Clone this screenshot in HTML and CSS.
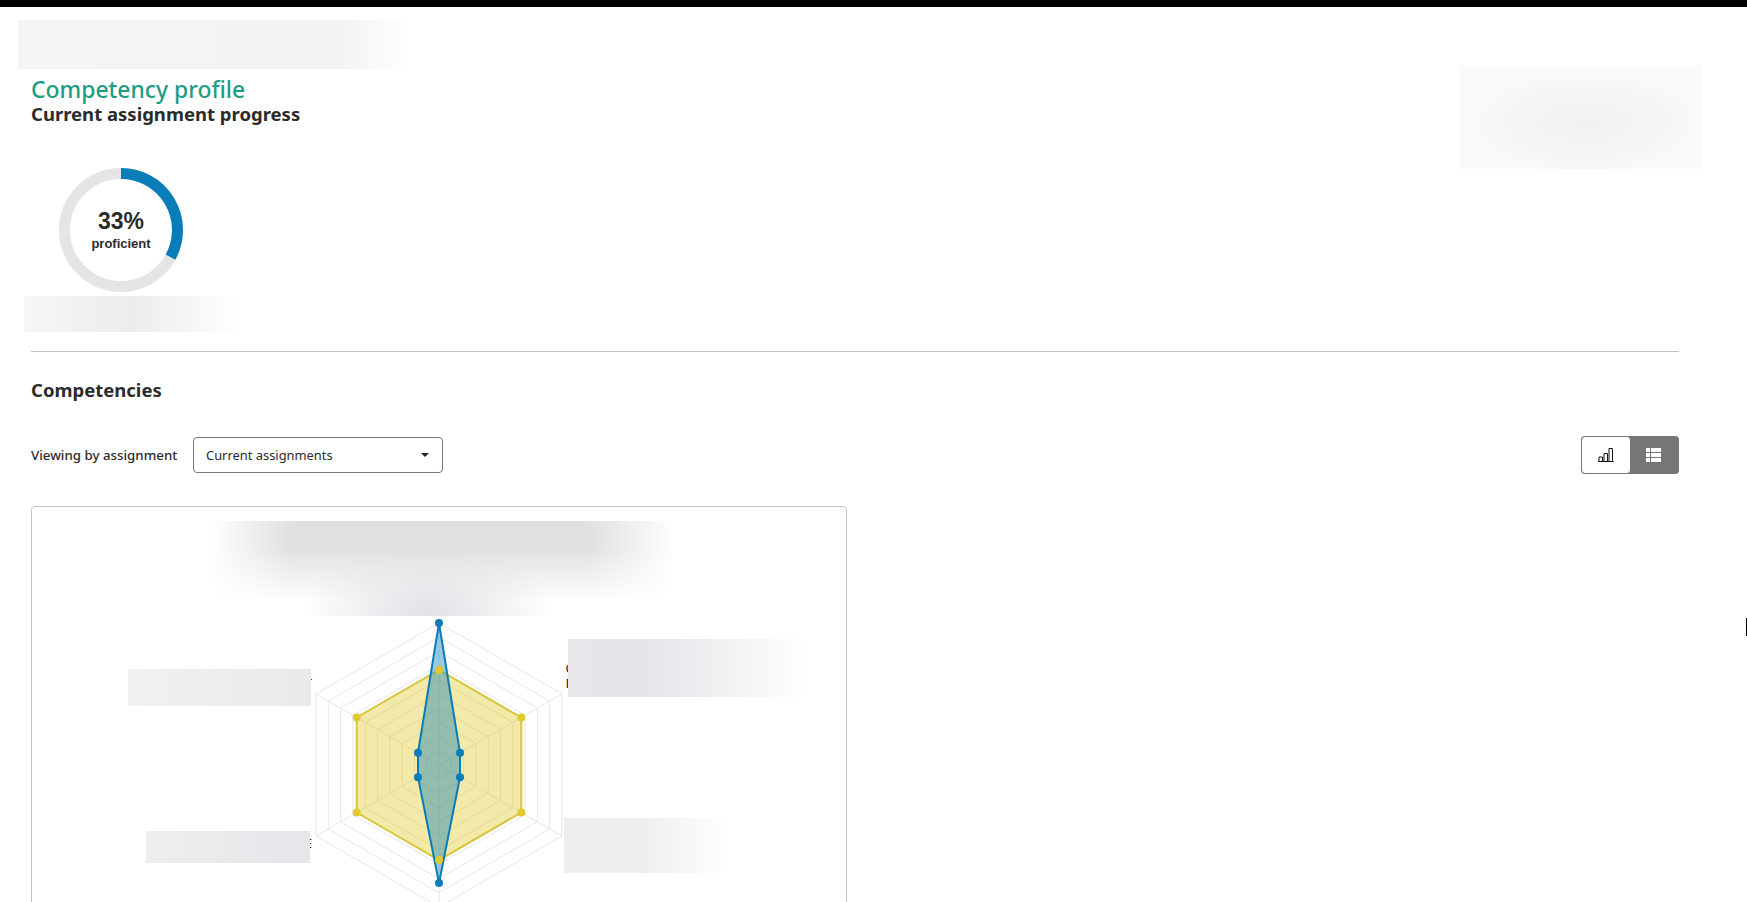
FILE: index.html
```html
<!DOCTYPE html>
<html lang="en">
<head>
<meta charset="utf-8">
<title>Competency profile</title>
<link rel="stylesheet" href="styles.css">
</head>
<body>
<div class="topbar"></div>
<main class="page">
  <section class="summary">
    <h1 class="title">Competency profile</h1>
    <h2 class="subtitle">Current assignment progress</h2>
    <div class="donut">
      <svg class="donut-ring" width="124" height="124" viewBox="-62 -62 124 124" aria-hidden="true">
        <circle class="donut-track" r="56.5"/>
        <path class="donut-value" d="M0 -56.5A56.5 56.5 0 0 1 49.5 27.2"/>
      </svg>
      <div class="donut-label">
        <span class="donut-num">33%</span>
        <span class="donut-text">proficient</span>
      </div>
    </div>
  </section>
  <hr class="rule">
  <h2 class="section-title">Competencies</h2>
  <div class="toolbar">
    <label class="field-label">Viewing by assignment</label>
    <div class="select">
      <span>Current assignments</span>
      <span class="caret"></span>
    </div>
    <div class="toggle">
      <button class="toggle-btn">
        <svg width="16" height="14" viewBox="0 0 16 14" aria-hidden="true"><path d="M.2 13.500h15.600M1 13V9h3.500v4M6 13V5.500h3.500V13M11 13V.5h3.500V13" fill="none" stroke="#111" stroke-width="1"/></svg>
      </button>
      <button class="toggle-btn is-active">
        <svg width="15" height="14" viewBox="0 0 15 14" aria-hidden="true"><path d="M0 0h4v4H0zM5 0h10v4H5zM0 5h4v4H0zM5 5h10v4H5zM0 10h4v4H0zM5 10h10v4H5z" fill="#fff"/></svg>
      </button>
    </div>
  </div>
  <div class="card">
    <svg class="radar" width="814" height="420" viewBox="-407 -258 814 420" aria-hidden="true">
      <defs>
        <polygon id="hex" points="0,-1 .866,-.5 .866,.5 0,1 -.866,.5 -.866,-.5" vector-effect="non-scaling-stroke"/>
      </defs>
      <g class="grid">
        <path d="M0 0V-142M0 0L123 -71M0 0L123 71M0 0V142M0 0L-123 71M0 0L-123 -71"/>
        <use href="#hex" transform="scale(14.2)"/>
        <use href="#hex" transform="scale(28.4)"/>
        <use href="#hex" transform="scale(42.6)"/>
        <use href="#hex" transform="scale(56.8)"/>
        <use href="#hex" transform="scale(71)"/>
        <use href="#hex" transform="scale(85.2)"/>
        <use href="#hex" transform="scale(99.4)"/>
        <use href="#hex" transform="scale(113.6)"/>
        <use href="#hex" transform="scale(127.8)"/>
        <use href="#hex" transform="scale(142)"/>
      </g>
      <polygon class="area-yellow" points="0,-95 82.3,-47.5 82.3,47.5 0,95 -82.3,47.5 -82.3,-47.5"/>
      <polygon class="area-blue" points="0,-142 21,-12.2 21,12.2 0,118 -21,12.2 -21,-12.2"/>
      <g class="dots-yellow">
        <circle cx="0" cy="-95" r="4"/><circle cx="82.3" cy="-47.5" r="4"/><circle cx="82.3" cy="47.500" r="4"/>
        <circle cx="0" cy="95" r="4"/><circle cx="-82.3" cy="47.5" r="4"/><circle cx="-82.3" cy="-47.5" r="4"/>
      </g>
      <g class="dots-blue">
        <circle cx="0" cy="-142" r="4"/><circle cx="21" cy="-12.2" r="4"/><circle cx="21" cy="12.2" r="4"/>
        <circle cx="0" cy="118" r="4"/><circle cx="-21" cy="12.2" r="4"/><circle cx="-21" cy="-12.2" r="4"/>
      </g>
      <text class="axis-label" x="-127" y="-77" text-anchor="end">T</text>
      <text class="axis-label" x="-127" y="83" text-anchor="end">E</text>
      <text class="axis-label" x="126.500" y="-92">C</text>
      <text class="axis-label" x="126.500" y="-77">P</text>
    </svg>
  </div>
</main>
<div class="redact r-top"></div>
<div class="redact r-side"></div>
<div class="redact r-under"></div>
<div class="redact r-chart"></div>
<div class="redact r-lt"></div>
<div class="redact r-rt"></div>
<div class="redact r-lb"></div>
<div class="redact r-rb"></div>
<div class="cursor"></div>
</body>
</html>
```
FILE: styles.css
```css
* { box-sizing: border-box; }
html, body { margin: 0; height: 902px; overflow: hidden; background: #fff; }
body { font-family: "Noto Sans", "Open Sans", sans-serif; color: #2b2b2b; position: relative; }
.topbar { height: 7px; background: #000; }
.page { padding: 70px 68px 0 31px; }
.summary { height: 274px; }
.title { margin: 0; font-size: 22.900px; line-height: 25px; font-weight: 500; color: #1f9c84; }
.subtitle { margin: 0; font-size: 18.500px; line-height: 24px; font-weight: 700; }
.donut { position: relative; width: 124px; height: 124px; margin: 42px 0 0 28px; }
.donut-ring { display: block; }
.donut-track { fill: none; stroke: #e5e5e5; stroke-width: 11; }
.donut-value { fill: none; stroke: #0a7cb8; stroke-width: 11; }
.donut-label { position: absolute; inset: 0; display: flex; flex-direction: column; align-items: center; justify-content: center; gap: 2px; font-family: "Liberation Sans", Arial, sans-serif; font-weight: 700; }
.donut-num { font-size: 23px; line-height: 26px; }
.donut-text { font-size: 13px; line-height: 16px; }
.rule { margin: 0; border: 0; border-top: 1px solid #c4c4c4; }
.section-title { margin: 23px 0 0; font-size: 18.500px; line-height: 29px; font-weight: 700; }
.toolbar { display: flex; align-items: center; margin-top: 32px; height: 38px; }
.field-label { font-size: 13.300px; font-weight: 500; width: 162px; }
.select { width: 250px; height: 36px; border: 1px solid #777; border-radius: 4px; display: flex; align-items: center; justify-content: space-between; padding: 0 13px 0 12px; font-size: 12.900px; }
.caret { width: 0; height: 0; border-left: 4px solid transparent; border-right: 4px solid transparent; border-top: 4px solid #222; }
.toggle { margin-left: auto; display: flex; width: 98px; height: 38px; background: #767676; border-radius: 4px; }
.toggle-btn { flex: 0 0 50px; padding: 0; border: 1px solid #777; background: #fff; border-radius: 4px; display: flex; align-items: center; justify-content: center; }
.toggle-btn.is-active { flex: 1; background: #767676; border-color: #767676; padding-right: 3px; }
.card { margin-top: 32px; width: 816px; height: 480px; border: 1px solid #c4c4c4; border-radius: 4px; }
.radar { display: block; }
.grid { fill: none; stroke: #e7e7e7; stroke-width: 1; }
.grid use { vector-effect: non-scaling-stroke; }
.area-yellow { fill: rgba(226, 200, 40, .4); stroke: #d8c63a; stroke-width: 2; }
.dots-yellow { fill: #dfc92f; }
.area-blue { fill: rgba(0, 122, 184, .4); stroke: #0a7cb8; stroke-width: 2; }
.dots-blue { fill: #0a7cb8; }
.axis-label { font-size: 13px; fill: #222; }
.redact { position: absolute; }
.r-top { left: 18px; top: 20px; width: 392px; height: 49px; background: linear-gradient(90deg, #f5f5f5 0, #f2f2f2 80%, #fff 100%); }
.r-side { left: 1460px; top: 65px; width: 242px; height: 104px; background: radial-gradient(ellipse 50% 50% at 52% 55%, #f1f1f1 0, #f4f4f4 55%, #fafafa 100%); }
.r-under { left: 24px; top: 296px; width: 216px; height: 36px; background: linear-gradient(90deg, #f6f6f6 0, #ececec 50%, #fff 100%); }
.r-chart { left: 210px; top: 521px; width: 484px; height: 95px; background:
  radial-gradient(ellipse 26% 80% at 45% 100%, #e1e1e6 0, rgba(225,225,230,.55) 45%, rgba(255,255,255,0) 100%),
  linear-gradient(180deg, rgba(255,255,255,0) 28%, #fff 85%),
  linear-gradient(90deg, #fff 0, #e0e0e0 17%, #e0e0e0 78%, #fff 96%); }
.r-lt { left: 128px; top: 669px; width: 183px; height: 37px; background: linear-gradient(90deg, #f1f1f2 0, #e9e9ec 100%); }
.r-rt { left: 568px; top: 639px; width: 240px; height: 58px; background: linear-gradient(90deg, #e6e6eb 0, #e4e4e9 30%, #fff 100%); }
.r-lb { left: 146px; top: 831px; width: 164px; height: 32px; background: linear-gradient(90deg, #eeeef0 0, #e6e6ea 100%); }
.r-rb { left: 564px; top: 818px; width: 166px; height: 55px; background: linear-gradient(90deg, #eeeef1 0, #eeeef1 45%, #fff 100%); }
.cursor { position: absolute; left: 1746px; top: 618px; width: 1px; height: 18px; background: #000; }
```
